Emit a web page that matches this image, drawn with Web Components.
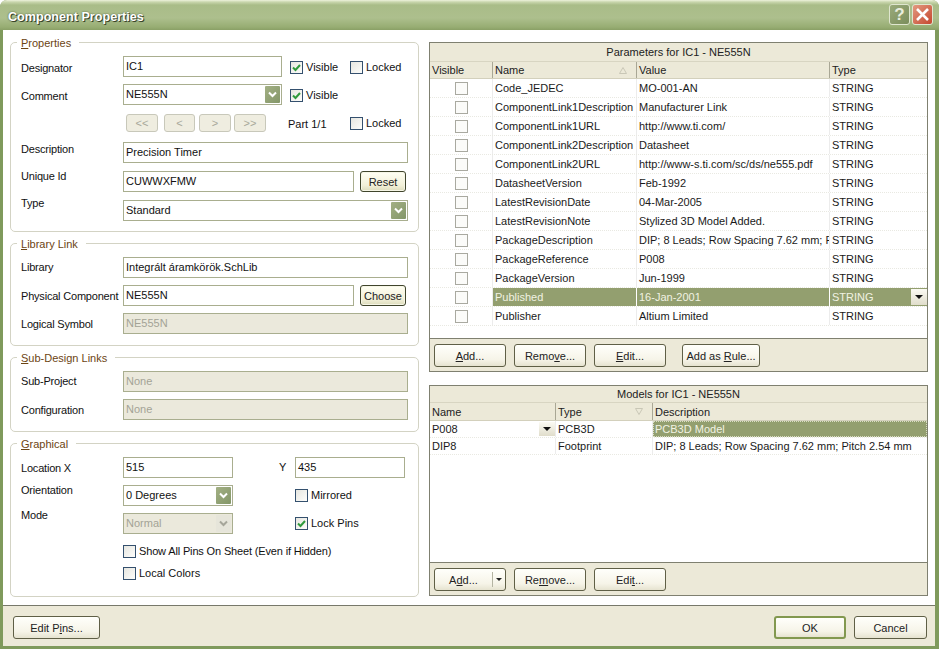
<!DOCTYPE html>
<html><head><meta charset="utf-8"><title>Component Properties</title>
<style>
html,body{margin:0;padding:0;background:#fff;font:11px/14px "Liberation Sans",Arial,sans-serif;color:#111}
.l{display:flex;flex-direction:column;width:409px}
.r{display:flex;flex-direction:column;width:499px;margin-left:10px;gap:13px}
.f{flex:1}
</style></head><body>
<template id="t-window"><style>
:host{display:flex;flex-direction:column;width:939px;height:649px;box-sizing:border-box;background:#7f9a5c;border-radius:7px 7px 0 0;overflow:hidden}
.tb{height:30px;flex:none;display:flex;align-items:center;padding:0 6px 0 8px;box-sizing:border-box;background:linear-gradient(#eef2dc 0,#c9d6ad 2px,#a9bc88 5px,#adbf8d 18px,#97ad73 27px,#8aa066 30px)}
.t{flex:1;font:bold 12.6px/16px "Liberation Sans",Arial,sans-serif;color:#fff;text-shadow:1px 1px 0 #39452a,0 0 2px #4b5a36;margin-top:3px}
.c{display:flex;gap:2px;margin-top:-1px}
.b{flex:1;min-height:0;margin:0 4px 0 3px;background:#fff;display:flex;padding:12px 7px 9px 7px;box-sizing:border-box}
.ft{height:41px;flex:none;margin:0 4px 3px 3px;background:#ece9d8;border-top:1px solid #77786a;display:flex;align-items:flex-start;padding:10px 8px 0 10px;box-sizing:border-box;gap:8px}
</style><div class="tb"><div class="t"></div><div class="c"><slot name="controls"></slot></div></div>
<div class="b"><slot></slot></div><div class="ft"><slot name="footer"></slot></div></template>

<template id="t-tbtn"><style>
:host{display:block;width:21px;height:21px;box-sizing:border-box;border:1px solid #dfe6cf;border-radius:3px;background:linear-gradient(135deg,#99aa7a,#7b8d5c)}
:host([close]){background:linear-gradient(135deg,#e39a80,#c5472f);margin-left:0}
.q{display:flex;height:100%;align-items:center;justify-content:center;font:bold 17px/1 "Liberation Sans",Arial,sans-serif;color:#e9eddd}
svg{display:block}
</style><div class="q"><slot></slot></div></template>

<template id="t-group"><style>
:host{display:block;border:1px solid #d3d3c4;border-radius:5px;padding:6px 10px var(--pb,10px);margin-bottom:var(--mb,11px);box-sizing:border-box}
.h{display:block;width:fit-content;margin:-13px 0 6px -4px;padding:0 8px 0 4px;background:#fff;color:#6c4412;height:14px;line-height:14px}
</style><div class="h"><slot name="title"></slot></div><slot></slot></template>

<template id="t-row"><style>
:host{display:flex;align-items:flex-start;height:var(--h,28px)}
.lb{flex:none;width:102px;margin-top:var(--ly,4px);height:14px;white-space:nowrap;letter-spacing:-.2px}
.ct{display:flex;align-items:flex-start;flex:1;min-width:0}
</style><div class="lb"><slot name="label"></slot></div><div class="ct"><slot></slot></div></template>

<template id="t-input"><style>
:host{display:block;box-sizing:border-box;height:21px;border:1px solid #a9ae8f;background:#fff;padding:1px 2px;line-height:17px;white-space:nowrap;overflow:hidden;width:var(--w,285px);flex:none;color:#111}
:host([disabled]){background:#ebe9dc;color:#a3a396}
</style><slot></slot></template>

<template id="t-combo"><style>
:host{display:flex;box-sizing:border-box;height:21px;border:1px solid #a9ae8f;background:#fff;line-height:17px;width:var(--w,285px);flex:none;color:#111;position:relative}
:host([disabled]){background:#ebe9dc;color:#a3a396}
.v{flex:1;padding:1px 2px;white-space:nowrap;overflow:hidden}
.a{flex:none;width:15px;height:17px;margin:1px 1px 1px 0;background:linear-gradient(135deg,#a3b084,#839668);display:flex;align-items:center;justify-content:center;border-radius:1px}
:host([disabled]) .a{background:#e6e5da}
:host([disabled]) path{stroke:#a6a69a}
svg{display:block}
</style><div class="v"><slot></slot></div><div class="a"><svg width="9" height="7" viewBox="0 0 9 7"><path d="M1 1.5 4.5 5 8 1.5" fill="none" stroke="#fff" stroke-width="2"/></svg></div></template>

<template id="t-check"><style>
:host{display:inline-flex;align-items:center;gap:3px;height:14px;white-space:nowrap;flex:none;width:var(--w,auto);margin-top:var(--my,0)}
.x{box-sizing:border-box;width:13px;height:13px;border:1px solid #34506e;background:linear-gradient(135deg,#e6e6e0,#fdfdfb);display:flex;align-items:center;justify-content:center;flex:none}
svg{display:none}
:host([checked]) svg{display:block}
</style><div class="x"><svg width="9" height="9" viewBox="0 0 9 9"><path d="M1 4.5 3.5 7 8 2" fill="none" stroke="#2f9a3c" stroke-width="2"/></svg></div><slot></slot></template>

<template id="t-btn"><style>
:host{display:inline-flex;box-sizing:border-box;width:var(--w,72px);height:var(--bh,23px);flex:none;border:1px solid #5f5f46;border-radius:3px;background:linear-gradient(#fffffb,#f6f4e8 70%,#e6e3d0);align-items:center;justify-content:center;white-space:nowrap;color:#222;margin-left:var(--ml,0);margin-top:var(--mt,0)}
:host([def]){background:linear-gradient(#fffff4,#f2f0d8 70%,#dcdcbc);border-color:#40452c;box-shadow:inset 0 0 0 1px #f6f6e6}
:host([ok]){border:2px solid #82984f}
:host([disabled]){border-color:#c8c8ba;background:#efede0;color:#a8a89a}
.t{flex:1;text-align:center;line-height:20px}
.s{display:none;align-items:center;justify-content:center;width:13px;border-left:1px solid #b4b4a2;box-sizing:border-box;height:15px}
:host([split]) .s{display:flex}
i{display:block;width:0;height:0;border:3px solid transparent;border-top:3px solid #222;border-bottom:0}
</style><div class="t"><slot></slot></div><div class="s"><i></i></div></template>

<template id="t-panel"><style>
:host{display:flex;flex-direction:column;box-sizing:border-box;border:1px solid #7f8070;background:#fff;height:var(--ph,100px)}
.h{flex:none;height:var(--th,19px);background:#ece9d8;text-align:center;line-height:var(--th,19px);border-bottom:1px solid #d8d5c2;box-sizing:border-box;color:#222}
.g{flex:1;min-height:0}
.tb{flex:none;box-sizing:border-box;height:var(--fh,33px);background:#ece9d8;border-top:1px solid #7f8070;padding:5px 4px 0;display:flex;gap:8px;align-items:flex-start}
</style><div class="h"><slot name="title"></slot></div><div class="g"><slot></slot></div><div class="tb"><slot name="tools"></slot></div></template>

<template id="t-tr"><style>
:host{display:grid;grid-template-columns:var(--cols);height:var(--rh,19px);box-sizing:border-box;border-bottom:1px dotted #e9e9e2}
:host([head]){background:#ece9d8;border-bottom:1px solid #d3d0bc;height:var(--hh,17px)}
</style><slot></slot></template>

<template id="t-td"><style>
:host{display:flex;align-items:center;min-width:0;overflow:hidden;white-space:nowrap;padding-left:2px;box-sizing:border-box;border-right:1px solid #ececec;position:relative;color:#1a1a1a}
:host([h]){border-right:1px solid #a9a795;padding-left:2px;color:#222}
:host([sel]){background:#939f6f;color:#f1f2e2;border-right:1px solid #fff}
:host([focus]){outline:1px dotted #d9ddc4;outline-offset:-1px;border-right:0}
:host([center]){justify-content:center;padding:0}
:host([noline]){border-right:0}
.b{position:absolute;right:0;top:1px;bottom:1px;width:16px;background:linear-gradient(#fbfaf3,#e0ddcb);display:none;align-items:center;justify-content:center}
:host([drop]) .b{display:flex}
i{display:block;width:0;height:0;border:4px solid transparent;border-top:4px solid #111;border-bottom:0}
.so{position:absolute;display:none;right:var(--sr,8px);top:5px}
:host([up]) .so,:host([down]) .so{display:block}
:host([down]) svg{transform:rotate(180deg)}
svg{display:block}
</style><slot></slot><span class="so"><svg width="8" height="7" viewBox="0 0 8 7"><path d="M4 .5 7.5 6.5H.5Z" fill="none" stroke="#c9c7b6"/></svg></span><div class="b"><i></i></div></template>

<template id="t-box"><style>
:host{display:block;width:13px;height:13px;box-sizing:border-box;border:1px solid #a9a9a0;background:#fbfbf9}
</style></template>

<x-window heading="Component Properties">
  <x-tbtn slot="controls">?</x-tbtn>
  <x-tbtn slot="controls" close><svg width="15" height="15" viewBox="0 0 15 15"><path d="M2 2 13 13M13 2 2 13" stroke="#fff" stroke-width="2.6" fill="none"/></svg></x-tbtn>

  <div class="l">
    <x-group>
      <span slot="title"><u>P</u>roperties</span>
      <x-row style="--h:28px;--ly:5px"><span slot="label">Designator</span><x-input style="--w:159px">IC1</x-input><x-check checked style="--w:60px;--my:4px;margin-left:8px">Visible</x-check><x-check style="--my:4px">Locked</x-check></x-row>
      <x-row style="--h:30px;--ly:5px"><span slot="label">Comment</span><x-combo style="--w:159px">NE555N</x-combo><x-check checked style="--my:4px;margin-left:8px">Visible</x-check></x-row>
      <x-row style="--h:28px"><span slot="label"></span><x-btn disabled style="--w:32px;--bh:18px;--ml:3px">&lt;&lt;</x-btn><x-btn disabled style="--w:31px;--bh:18px;--ml:6px">&lt;</x-btn><x-btn disabled style="--w:32px;--bh:18px;--ml:4px">&gt;</x-btn><x-btn disabled style="--w:32px;--bh:18px;--ml:3px">&gt;&gt;</x-btn><span style="margin:3px 0 0 22px;width:62px">Part 1/1</span><x-check style="--my:2px">Locked</x-check></x-row>
      <x-row style="--h:29px;--ly:0px"><span slot="label">Description</span><x-input>Precision Timer</x-input></x-row>
      <x-row style="--h:29px;--ly:-2px"><span slot="label">Unique Id</span><x-input style="--w:231px">CUWWXFMW</x-input><x-btn def style="--w:46px;--bh:21px;--ml:6px">Reset</x-btn></x-row>
      <x-row style="--h:21px;--ly:-4px"><span slot="label">Type</span><x-combo>Standard</x-combo></x-row>
    </x-group>
    <x-group style="--pb:11px">
      <span slot="title"><u>L</u>ibrary Link</span>
      <x-row style="--ly:3px"><span slot="label">Library</span><x-input>Integrált áramkörök.SchLib</x-input></x-row>
      <x-row><span slot="label">Physical Component</span><x-input style="--w:231px">NE555N</x-input><x-btn def style="--w:46px;--bh:21px;--ml:6px">Choose</x-btn></x-row>
      <x-row style="--h:21px"><span slot="label">Logical Symbol</span><x-input disabled>NE555N</x-input></x-row>
    </x-group>
    <x-group style="--pb:11px">
      <span slot="title"><u>S</u>ub-Design Links</span>
      <x-row style="--ly:3px"><span slot="label">Sub-Project</span><x-input disabled>None</x-input></x-row>
      <x-row style="--h:21px"><span slot="label">Configuration</span><x-input disabled>None</x-input></x-row>
    </x-group>
    <x-group style="--mb:0px;--pb:13px">
      <span slot="title"><u>G</u>raphical</span>
      <x-row><span slot="label">Location X</span><x-input style="--w:110px">515</x-input><span style="margin:3px 0 0 46px;width:16px">Y</span><x-input style="--w:110px">435</x-input></x-row>
      <x-row style="--ly:-2px"><span slot="label">Orientation</span><x-combo style="--w:110px">0 Degrees</x-combo><x-check style="--my:3px;margin-left:62px">Mirrored</x-check></x-row>
      <x-row style="--ly:-5px"><span slot="label">Mode</span><x-combo disabled style="--w:110px">Normal</x-combo><x-check checked style="--my:3px;margin-left:62px">Lock Pins</x-check></x-row>
      <x-row style="--h:23px"><span slot="label"></span><x-check style="--my:3px;letter-spacing:-.15px">Show All Pins On Sheet (Even if Hidden)</x-check></x-row>
      <x-row style="--h:19px"><span slot="label"></span><x-check style="--my:2px">Local Colors</x-check></x-row>
    </x-group>
  </div>

  <div class="r">
    <x-panel style="--ph:330px;--th:19px;--cols:63px 144px 193px 1fr;--fh:33px">
      <span slot="title">Parameters for IC1 - NE555N</span>
      <x-tr head><x-td h>Visible</x-td><x-td h up style="--sr:9px">Name</x-td><x-td h>Value</x-td><x-td h noline>Type</x-td></x-tr>
      <x-tr><x-td center><x-box></x-box></x-td><x-td>Code_JEDEC</x-td><x-td>MO-001-AN</x-td><x-td noline>STRING</x-td></x-tr>
      <x-tr><x-td center><x-box></x-box></x-td><x-td>ComponentLink1Description</x-td><x-td>Manufacturer Link</x-td><x-td noline>STRING</x-td></x-tr>
      <x-tr><x-td center><x-box></x-box></x-td><x-td>ComponentLink1URL</x-td><x-td>http://www.ti.com/</x-td><x-td noline>STRING</x-td></x-tr>
      <x-tr><x-td center><x-box></x-box></x-td><x-td>ComponentLink2Description</x-td><x-td>Datasheet</x-td><x-td noline>STRING</x-td></x-tr>
      <x-tr><x-td center><x-box></x-box></x-td><x-td>ComponentLink2URL</x-td><x-td>http://www-s.ti.com/sc/ds/ne555.pdf</x-td><x-td noline>STRING</x-td></x-tr>
      <x-tr><x-td center><x-box></x-box></x-td><x-td>DatasheetVersion</x-td><x-td>Feb-1992</x-td><x-td noline>STRING</x-td></x-tr>
      <x-tr><x-td center><x-box></x-box></x-td><x-td>LatestRevisionDate</x-td><x-td>04-Mar-2005</x-td><x-td noline>STRING</x-td></x-tr>
      <x-tr><x-td center><x-box></x-box></x-td><x-td>LatestRevisionNote</x-td><x-td>Stylized 3D Model Added.</x-td><x-td noline>STRING</x-td></x-tr>
      <x-tr><x-td center><x-box></x-box></x-td><x-td>PackageDescription</x-td><x-td>DIP; 8 Leads; Row Spacing 7.62 mm; Pitch 2.54 mm</x-td><x-td noline>STRING</x-td></x-tr>
      <x-tr><x-td center><x-box></x-box></x-td><x-td>PackageReference</x-td><x-td>P008</x-td><x-td noline>STRING</x-td></x-tr>
      <x-tr><x-td center><x-box></x-box></x-td><x-td>PackageVersion</x-td><x-td>Jun-1999</x-td><x-td noline>STRING</x-td></x-tr>
      <x-tr><x-td center><x-box></x-box></x-td><x-td sel>Published</x-td><x-td sel>16-Jan-2001</x-td><x-td sel drop noline>STRING</x-td></x-tr>
      <x-tr><x-td center><x-box></x-box></x-td><x-td>Publisher</x-td><x-td>Altium Limited</x-td><x-td noline>STRING</x-td></x-tr>
      <x-btn slot="tools"><u>A</u>dd...</x-btn><x-btn slot="tools">Remo<u>v</u>e...</x-btn><x-btn slot="tools"><u>E</u>dit...</x-btn><x-btn slot="tools" style="--w:78px;--ml:8px">Add as <u>R</u>ule...</x-btn>
    </x-panel>
    <x-panel style="--ph:211px;--th:17px;--cols:126px 97px 1fr;--rh:17px;--hh:18px;--fh:33px">
      <span slot="title">Models for IC1 - NE555N</span>
      <x-tr head><x-td h>Name</x-td><x-td h down style="--sr:9px">Type</x-td><x-td h noline>Description</x-td></x-tr>
      <x-tr><x-td drop>P008</x-td><x-td>PCB3D</x-td><x-td sel focus>PCB3D Model</x-td></x-tr>
      <x-tr><x-td>DIP8</x-td><x-td>Footprint</x-td><x-td noline>DIP; 8 Leads; Row Spacing 7.62 mm; Pitch 2.54 mm</x-td></x-tr>
      <x-btn slot="tools" split>A<u>d</u>d...</x-btn><x-btn slot="tools">Re<u>m</u>ove...</x-btn><x-btn slot="tools">Edi<u>t</u>...</x-btn>
    </x-panel>
  </div>

  <x-btn slot="footer" style="--w:87px">Edit P<u>i</u>ns...</x-btn>
  <span slot="footer" class="f"></span>
  <x-btn slot="footer" ok style="--w:72px">OK</x-btn>
  <x-btn slot="footer" style="--w:73px">Cancel</x-btn>
</x-window>
<script>
function def(tag,tpl,init){customElements.define(tag,class extends HTMLElement{constructor(){super();this.attachShadow({mode:"open"}).appendChild(document.getElementById(tpl).content.cloneNode(true));if(init)init(this)}})}
def("x-window","t-window",function(e){e.shadowRoot.querySelector(".t").textContent=e.getAttribute("heading")||""});
def("x-tbtn","t-tbtn");def("x-group","t-group");def("x-row","t-row");def("x-input","t-input");def("x-combo","t-combo");
def("x-check","t-check");def("x-btn","t-btn");def("x-panel","t-panel");def("x-tr","t-tr");def("x-td","t-td");def("x-box","t-box");
</script>
</body></html>
